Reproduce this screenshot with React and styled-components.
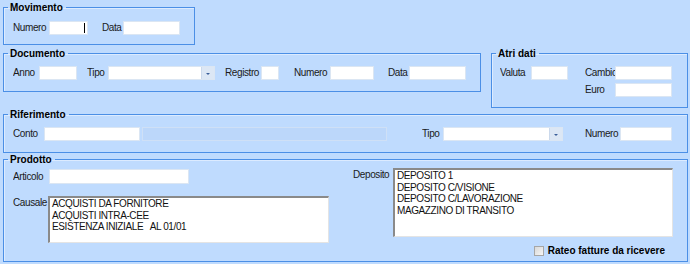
import React from 'react';
import styled, { createGlobalStyle, css } from 'styled-components';

const GlobalStyle = createGlobalStyle`
  html, body {
    margin: 0;
    padding: 0;
    background: #bfdbfe;
  }
  body {
    font-family: "Liberation Sans", Arial, sans-serif;
    font-size: 10px;
    color: #111;
  }
`;

const Page = styled.div`
  width: 690px;
  height: 264px;
  box-sizing: border-box;
  padding: 1px 0 0 3px;
  background: #bfdbfe;
  display: flex;
  flex-direction: column;
  overflow: hidden;
`;

const Row = styled.div`
  display: flex;
  align-items: flex-start;
  margin-top: ${(p) => p.$mt || 0}px;
`;

const GroupBox = styled.fieldset`
  box-sizing: border-box;
  width: ${(p) => p.$w}px;
  height: ${(p) => p.$h}px;
  margin: ${(p) => p.$mt || 0}px 0 0 ${(p) => p.$ml || 0}px;
  padding: 0;
  border: 1px solid #4b8fe6;
  box-shadow: inset 1px 1px 0 #dcebff;
  min-width: 0;
`;

const Legend = styled.legend`
  margin-left: 4px;
  padding: 1px 3px 0 2px;
  font-weight: bold;
  font-size: 10px;
  line-height: 11px;
  color: #000;
`;

const Line = styled.div`
  display: flex;
  align-items: ${(p) => (p.$top ? 'flex-start' : 'center')};
  padding-left: ${(p) => p.$pl || 0}px;
  margin-top: ${(p) => p.$mt || 0}px;
`;

const Label = styled.span`
  width: ${(p) => p.$w}px;
  margin-left: ${(p) => p.$ml || 0}px;
  margin-top: ${(p) => (p.$top ? 1 : 0)}px;
  flex: none;
  overflow: hidden;
  white-space: nowrap;
  line-height: 12px;
  letter-spacing: -0.4px;
  color: #1a1a1a;
`;

const TextBox = styled.div`
  position: relative;
  box-sizing: border-box;
  flex: none;
  width: ${(p) => p.$w}px;
  height: ${(p) => p.$h || 14}px;
  margin-left: ${(p) => p.$ml || 0}px;
  background: ${(p) => (p.$disabled ? '#bcd7fa' : '#fff')};
  border: 1px solid ${(p) => (p.$disabled ? '#cfe0f6' : '#dbe6f3')};
  ${(p) =>
    p.$caret &&
    css`
      &::after {
        content: '';
        position: absolute;
        right: 2px;
        top: 1px;
        width: 1px;
        height: 10px;
        background: #000;
      }
    `}
`;

const Combo = styled.div`
  box-sizing: border-box;
  flex: none;
  width: ${(p) => p.$w}px;
  height: 14px;
  display: flex;
  background: #fff;
  border: 1px solid #dbe6f3;
`;

const ComboButton = styled.div`
  margin-left: auto;
  width: 12px;
  height: 12px;
  background: #dce7f5;
  border-left: 1px solid #cbd9ec;
  display: flex;
  align-items: center;
  justify-content: center;

  &::before {
    content: '';
    width: 0;
    height: 0;
    margin-top: 2px;
    border-left: 2.5px solid transparent;
    border-right: 2.5px solid transparent;
    border-top: 2.5px solid #3a5f9a;
  }
`;

const ListBox = styled.div`
  box-sizing: border-box;
  flex: none;
  width: ${(p) => p.$w}px;
  height: ${(p) => p.$h}px;
  padding-left: 2px;
  background: #fff;
  border-top: 2px solid #8a8a8a;
  border-left: 2px solid #8a8a8a;
  border-right: 1px solid #e4e4e4;
  border-bottom: 1px solid #e4e4e4;
  line-height: 11.7px;
  letter-spacing: -0.4px;
  white-space: pre;
  color: #111;
`;

const Column = styled.div`
  display: flex;
  flex-direction: column;
  width: ${(p) => p.$w || 'auto'}px;
  padding-left: ${(p) => p.$pl || 0}px;
  margin-left: ${(p) => p.$ml || 0}px;
  gap: ${(p) => p.$gap || 0}px;
  flex: none;
  box-sizing: border-box;
`;

const CheckRow = styled.label`
  display: flex;
  align-items: center;
  justify-content: flex-end;
  padding-right: 8px;
  margin-top: 8px;
  font-weight: bold;
  letter-spacing: 0;
  color: #000;
`;

const CheckBox = styled.span`
  box-sizing: border-box;
  width: 10px;
  height: 10px;
  margin-right: 4px;
  border: 1px solid #a6a6a6;
  background: linear-gradient(135deg, #d8d8d8, #f6f6f6);
`;

const Field = ({ label, lw, ml, w, caret }) => (
  <>
    <Label $w={lw} $ml={ml}>{label}</Label>
    <TextBox $w={w} $caret={caret} />
  </>
);

const App = () => (
  <>
    <GlobalStyle />
    <Page>
      <GroupBox $w={192} $h={44}>
        <Legend>Movimento</Legend>
        <Line $pl={0} $mt={8}>
          <Field label="Numero" lw={36} ml={9} w={39} caret />
          <Field label="Data" lw={21} ml={14} w={57} />
        </Line>
      </GroupBox>

      <Row $mt={2}>
        <GroupBox $w={478} $h={45}>
          <Legend>Documento</Legend>
          <Line $mt={7}>
            <Field label="Anno" lw={26} ml={9} w={38} />
            <Label $w={21} $ml={10}>Tipo</Label>
            <Combo $w={107}>
              <ComboButton />
            </Combo>
            <Field label="Registro" lw={36} ml={10} w={18} />
            <Field label="Numero" lw={36} ml={15} w={44} />
            <Field label="Data" lw={21} ml={14} w={57} />
          </Line>
        </GroupBox>

        <GroupBox $w={197} $h={61} $ml={10}>
          <Legend>Atri dati</Legend>
          <Line $mt={7} $top>
            <Column>
              <Line>
                <Field label="Valuta" lw={31} ml={8} w={37} />
              </Line>
            </Column>
            <Column $ml={17} $gap={3}>
              <Line>
                <Field label="Cambio" lw={30} w={57} />
              </Line>
              <Line>
                <Field label="Euro" lw={30} w={57} />
              </Line>
            </Column>
          </Line>
        </GroupBox>
      </Row>

      <GroupBox $w={685} $h={45}>
        <Legend>Riferimento</Legend>
        <Line $mt={7}>
          <Field label="Conto" lw={31} ml={9} w={96} />
          <TextBox $w={245} $ml={2} $disabled />
          <Label $w={21} $ml={35}>Tipo</Label>
          <Combo $w={120}>
            <ComboButton />
          </Combo>
          <Field label="Numero" lw={35} ml={22} w={52} />
        </Line>
      </GroupBox>

      <GroupBox $w={685} $h={109}>
        <Legend>Prodotto</Legend>
        <Line $top>
          <Column $w={349} $pl={9}>
            <Line $mt={4}>
              <Label $w={36}>Articolo</Label>
              <TextBox $w={140} $h={15} />
            </Line>
            <Line $mt={12} $top>
              <Label $w={35} $top>Causale</Label>
              <ListBox $w={281} $h={47}>
                {'ACQUISTI DA FORNITORE\nACQUISTI INTRA-CEE\nESISTENZA INIZIALE   AL 01/01'}
              </ListBox>
            </Line>
          </Column>
          <Column $w={320}>
            <Line $mt={3} $top>
              <Label $w={40} $top>Deposito</Label>
              <ListBox $w={280} $h={69}>
                {'DEPOSITO 1\nDEPOSITO C/VISIONE\nDEPOSITO C/LAVORAZIONE\nMAGAZZINO DI TRANSITO'}
              </ListBox>
            </Line>
            <CheckRow>
              <CheckBox />
              Rateo fatture da ricevere
            </CheckRow>
          </Column>
        </Line>
      </GroupBox>
    </Page>
  </>
);

export default App;
